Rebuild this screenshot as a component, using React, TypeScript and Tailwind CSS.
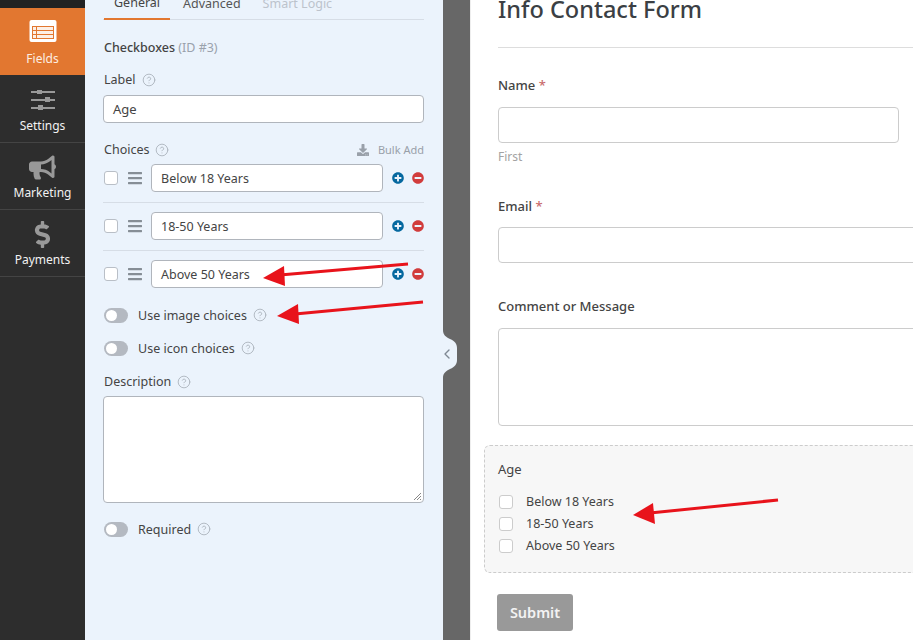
import { CircleHelp, ChevronLeft } from 'lucide-react'
import { FaBars, FaBullhorn, FaDollarSign, FaDownload, FaMinusCircle, FaPlusCircle } from 'react-icons/fa'

const font = { fontFamily: '"Noto Sans", "Open Sans", sans-serif' }

function Help({ className = '' }: { className?: string }) {
  return <CircleHelp className={`size-[14px] text-[#aab2bc] ${className}`} strokeWidth={1.5} />
}

function FieldsIcon() {
  return (
    <svg className="-mt-[5px]" width="28" height="22" viewBox="0 0 28 22">
      <rect x="0.5" y="0" width="27" height="22" rx="2" fill="#fff" />
      <rect x="3" y="6" width="22" height="13" fill="#e27730" />
      <rect x="4" y="7" width="3" height="3" fill="#fdf0e6" />
      <rect x="8" y="7" width="16" height="3" fill="#fdf0e6" />
      <rect x="4" y="11" width="3" height="3" fill="#fdf0e6" />
      <rect x="8" y="11" width="16" height="3" fill="#fdf0e6" />
      <rect x="4" y="15" width="3" height="3" fill="#fdf0e6" />
      <rect x="8" y="15" width="16" height="3" fill="#fdf0e6" />
    </svg>
  )
}

function SlidersIcon() {
  return (
    <svg width="24" height="20" viewBox="0 0 24 20" fill="#999">
      <rect x="0" y="1" width="24" height="2" />
      <rect x="0" y="9" width="24" height="2" />
      <rect x="0" y="17" width="24" height="2" />
      <rect x="6" y="0" width="5" height="4" />
      <rect x="14" y="7" width="5" height="5" />
      <rect x="7" y="15" width="5" height="5" />
    </svg>
  )
}

function NavItem({ label, icon, className }: { label: string; icon: React.ReactNode; className: string }) {
  return (
    <div className={`flex flex-col items-center border-b text-[12px] leading-[18px] ${className}`}>
      <div className="flex h-[30px] items-center text-[#999]">{icon}</div>
      <span className="mt-[2px]">{label}</span>
    </div>
  )
}

function Toggle({ label, className = '' }: { label: string; className?: string }) {
  return (
    <div className={`flex h-[16px] items-center text-[12.5px] text-[#444] ${className}`}>
      <div className="flex h-[15px] w-[24px] items-center rounded-full bg-[#b4b9c1] pl-[2px]">
        <div className="size-[11px] rounded-full bg-white" />
      </div>
      <span className="ml-[10px] pt-[2px]">{label}</span>
      <Help className="ml-[6px]" />
    </div>
  )
}

function Choice({ value, last }: { value: string; last?: boolean }) {
  return (
    <div className={`flex items-center pl-px ${last ? '' : 'mb-[9px] border-b border-[#d6dde6] pb-[10px]'}`}>
      <div className="size-[14px] rounded-[3px] border border-[#b9bfc7] bg-white" />
      <FaBars className="ml-[9px] size-[16px] text-[#868e96]" />
      <div className="ml-[8px] flex h-[28px] w-[232px] items-center rounded-[4px] border border-[#b0b5bc] bg-white pl-[9px] pt-[3px] text-[12.5px] text-[#444]">
        {value}
      </div>
      <FaPlusCircle className="ml-[9px] size-[12px] text-[#05689f]" />
      <FaMinusCircle className="ml-[8px] size-[12px] text-[#d13c3c]" />
    </div>
  )
}

function Arrow({ d, head }: { d: string; head: string }) {
  return (
    <>
      <path d={d} stroke="#e8131b" strokeWidth="3" fill="none" />
      <polygon points={head} fill="#e8131b" />
    </>
  )
}

export default function App() {
  return (
    <div className="relative flex h-[640px] w-[913px] overflow-hidden bg-white" style={font}>
      <aside className="w-[85px] shrink-0 bg-[#2d2d2d]">
        <div className="h-[8px] bg-[#222]" />
        <NavItem label="Fields" className="h-[67px] border-[#e27730] bg-[#e27730] pt-[10px] text-[#fdeee3]" icon={<FieldsIcon />} />
        <NavItem label="Settings" className="h-[68px] border-[#444] pt-[10px] text-[#f2f2f2]" icon={<SlidersIcon />} />
        <NavItem label="Marketing" className="h-[67px] border-[#444] pt-[9px] text-[#f2f2f2]" icon={<FaBullhorn className="size-[27px]" />} />
        <NavItem label="Payments" className="h-[67px] border-[#444] pt-[9px] text-[#f2f2f2]" icon={<FaDollarSign className="size-[27px]" />} />
      </aside>

      <section className="w-[358px] shrink-0 bg-[#ebf3fc] pl-[18px] pr-[19px] text-[12.5px] text-[#444]">
        <div className="-mt-[12px] flex h-[32px] items-end gap-[13px] border-b border-[#d6dde6] pl-px">
          <span className="-mb-px border-b-2 border-[#e27730] px-[10px] pb-[5px] text-[#444]">General</span>
          <span className="pb-[5px] text-[#555]">Advanced</span>
          <span className="ml-[9px] pb-[5px] text-[#bcc3cc]">Smart Logic</span>
        </div>
        <div className="mt-[19px] h-[18px] pl-px leading-[18px]">
          <span className="font-medium">Checkboxes</span> <span className="text-[#9aa2ac]">(ID #3)</span>
        </div>
        <div className="mt-[14px] flex h-[18px] items-center gap-[6px] pl-px">
          Label <Help />
        </div>
        <div className="mt-[6px] flex h-[28px] items-center rounded-[4px] border border-[#b0b5bc] bg-white pl-[9px] pt-[2px] text-[13px]">
          Age
        </div>
        <div className="mt-[18px] flex h-[18px] items-center pl-px">
          Choices <Help className="ml-[6px]" />
          <FaDownload className="ml-auto size-[12px] text-[#99a0a9]" />
          <span className="ml-[9px] text-[11px] text-[#99a0a9]">Bulk Add</span>
        </div>
        <div className="mt-[5px]">
          <Choice value="Below 18 Years" />
          <Choice value="18-50 Years" />
          <Choice value="Above 50 Years" last />
        </div>
        <Toggle label="Use image choices" className="ml-px mt-[19px]" />
        <Toggle label="Use icon choices" className="ml-px mt-[17px]" />
        <div className="mt-[16px] flex h-[18px] items-center gap-[6px] pl-px pt-[2px]">
          Description <Help />
        </div>
        <div className="relative mt-[6px] h-[107px] rounded-[4px] border border-[#b0b5bc] bg-white">
          <svg className="absolute bottom-px right-px" width="9" height="9" viewBox="0 0 9 9">
            <path d="M8 1 1 8M8 4 4 8M8 7 7 8" stroke="#888" strokeWidth="1" />
          </svg>
        </div>
        <Toggle label="Required" className="ml-px mt-[18px]" />
      </section>

      <div className="relative w-[27px] shrink-0 bg-[#676767]">
        <svg className="absolute left-0 top-[330px]" width="15" height="48" viewBox="0 0 15 48">
          <path d="M0 0C0 5 3 7 7 9C12 11 14 14 14 18V30C14 34 12 37 7 39C3 41 0 43 0 48Z" fill="#ebf3fc" />
        </svg>
        <ChevronLeft className="absolute left-[-4px] top-[346px] size-[16px] text-[#7f8894]" strokeWidth={2} />
      </div>

      <main className="min-w-0 flex-1 border-l border-[#eee] bg-white pl-[27px] text-[#444]">
        <h1 className="-mt-[7px] h-[32px] text-[23.5px] font-medium leading-[32px] text-[#3b3f44]">Info Contact Form</h1>
        <div className="mt-[22px] border-t border-[#ddd]" />
        <div className="mt-[27px] h-[20px] text-[13px] font-medium leading-[20px]">
          Name <span className="text-[#c96a6a]">*</span>
        </div>
        <div className="mt-[12px] h-[36px] w-[401px] rounded-[4px] border border-[#ccc]" />
        <div className="mt-[6px] h-[16px] text-[12px] leading-[16px] text-[#a3a3a3]">First</div>
        <div className="mt-[31px] h-[20px] text-[13px] font-medium leading-[20px]">
          Email <span className="text-[#c96a6a]">*</span>
        </div>
        <div className="mt-[11px] h-[36px] w-[440px] rounded-[4px] border border-[#ccc]" />
        <div className="mt-[33px] h-[20px] text-[13px] font-medium leading-[20px]">Comment or Message</div>
        <div className="mt-[12px] h-[98px] w-[440px] rounded-[4px] border border-[#ccc]" />
        <div className="-ml-[14px] mt-[19px] h-[128px] w-[460px] rounded-[6px] border border-dashed border-[#ccc] bg-[#f7f7f7] pl-[14px] pt-[13px]">
          <div className="-ml-px h-[20px] text-[13px] leading-[20px]">Age</div>
          <div className="mt-[13px] flex flex-col gap-[2px] text-[12.5px]">
            {['Below 18 Years', '18-50 Years', 'Above 50 Years'].map((o) => (
              <div key={o} className="flex h-[20px] items-center">
                <div className="size-[14px] rounded-[3px] border border-[#ccc] bg-white" />
                <span className="ml-[13px]">{o}</span>
              </div>
            ))}
          </div>
        </div>
        <button className="-ml-px mt-[21px] h-[37px] w-[76px] rounded-[3px] bg-[#999] text-[14.5px] font-semibold text-[#f3f3f3]">
          Submit
        </button>
      </main>

      <svg className="pointer-events-none absolute inset-0" width="913" height="640" viewBox="0 0 913 640">
        <Arrow d="M408 264 280 275" head="263,278 284,266 285,286" />
        <Arrow d="M423 302 295 314" head="277,316 298,304 299,324" />
        <Arrow d="M778 500 650 513" head="633,515 653,503 655,524" />
      </svg>
    </div>
  )
}
